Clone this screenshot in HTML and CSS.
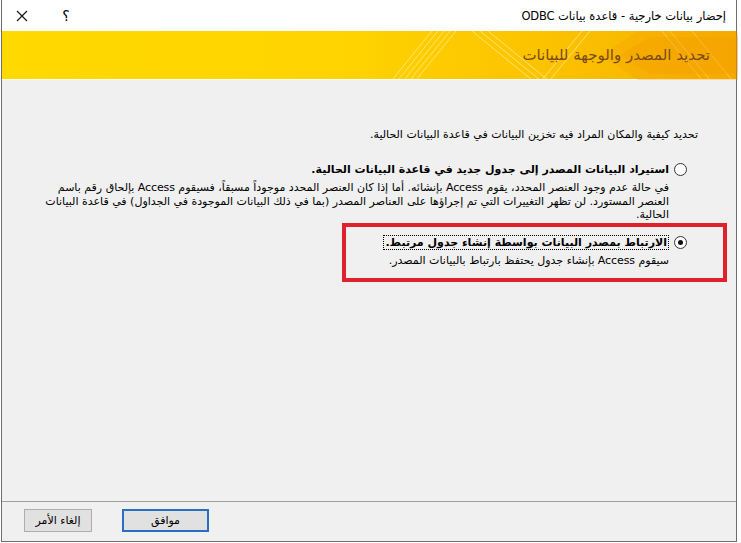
FILE: index.html
```html
<!DOCTYPE html>
<html lang="ar" dir="rtl">
<head>
<meta charset="UTF-8">
<title>إحضار بيانات خارجية - قاعدة بيانات ODBC</title>
<link rel="stylesheet" href="styles.css">
</head>
<body>

<div class="window">

  <!-- Title bar -->
  <div class="titlebar">
    <span class="title">إحضار بيانات خارجية - قاعدة بيانات ODBC</span>
    <div class="title-buttons">
      <span class="tb-help">؟</span>
      <span class="tb-close">
        <svg width="12" height="12" viewBox="0 0 12 12"><path d="M1 1 L11 11 M11 1 L1 11" stroke="#111" stroke-width="1.1" fill="none"/></svg>
      </span>
    </div>
  </div>

  <!-- Yellow banner -->
  <div class="banner">
    <svg class="banner-art" width="736" height="49" viewBox="0 0 736 49" preserveAspectRatio="none">
      <g stroke="#fff6b0" stroke-opacity=".6" stroke-width="1" fill="none">
        <path d="M390 49 L430 0"/><path d="M396 49 L436 0"/><path d="M402 49 L442 0"/>
        <path d="M408 49 L448 0"/><path d="M414 49 L454 0"/>
        <path d="M470 0 L530 49"/><path d="M478 0 L538 49"/><path d="M486 0 L546 49"/>
        <path d="M540 49 L580 0"/><path d="M548 49 L588 0"/>
        <path d="M660 0 L700 49"/><path d="M668 0 L708 49"/><path d="M690 0 L730 49"/>
      </g>
      <polygon points="600,24 636,0 736,0 736,49 636,49" fill="#f5a300" fill-opacity=".35"/>
      <polygon points="618,24 648,6 736,6 736,43 648,43" fill="#f29a00" fill-opacity=".3"/>
    </svg>
    <span class="banner-text">تحديد المصدر والوجهة للبيانات</span>
  </div>

  <!-- Content -->
  <div class="content">
    <p class="intro">تحديد كيفية والمكان المراد فيه تخزين البيانات في قاعدة البيانات الحالية.</p>

    <div class="option">
      <span class="radio"></span>
      <div class="option-body">
        <div class="option-label">استيراد البيانات المصدر إلى جدول جديد في قاعدة البيانات الحالية.</div>
        <div class="option-desc">في حالة عدم وجود العنصر المحدد، يقوم Access بإنشائه. أما إذا كان العنصر المحدد موجوداً مسبقاً، فسيقوم Access بإلحاق رقم باسم العنصر المستورد. لن تظهر التغييرات التي تم إجراؤها على العناصر المصدر (بما في ذلك البيانات الموجودة في الجداول) في قاعدة البيانات الحالية.</div>
      </div>
    </div>

    <div class="option option-marked">
      <span class="radio checked"></span>
      <div class="option-body">
        <div class="option-label"><span class="focus">الارتباط بمصدر البيانات بواسطة إنشاء جدول مرتبط.</span></div>
        <div class="option-desc">سيقوم Access بإنشاء جدول يحتفظ بارتباط بالبيانات المصدر.</div>
      </div>
    </div>
  </div>

  <!-- Buttons -->
  <div class="footer">
    <button class="btn btn-default">موافق</button>
    <button class="btn">إلغاء الأمر</button>
  </div>

</div>

</body>
</html>
```

FILE: styles.css
```css
* { margin: 0; padding: 0; box-sizing: border-box; }
body { background: #fff; font-family: "DejaVu Sans", sans-serif; font-size: 11px; color: #000; }

.window { width: 736px; height: 542px; margin: 0 auto 0 1px; border: 1px solid #6e6e6e; border-top: none; background: #f0f0f0; display: flex; flex-direction: column; }

.titlebar { height: 31px; background: #fff; display: flex; align-items: center; justify-content: space-between; padding-right: 10px; }
.title { font-size: 11.5px; letter-spacing: -0.2px; color: #000; }
.title-buttons { display: flex; align-items: center; }
.tb-help { width: 40px; text-align: center; font-size: 14px; margin-left: 4px; }
.tb-close { width: 40px; display: flex; justify-content: center; }

.banner { position: relative; height: 49px; background: linear-gradient(to right, #ffd900 0%, #ffd400 45%, #fbc200 75%, #f6ae00 100%); display: flex; align-items: center; padding-right: 26px; border-bottom: 1px solid #fff; }
.banner-art { position: absolute; left: 0; top: 0; }
.banner-text { position: relative; font-size: 15px; color: #7b4a12; }

.content { flex: 1; padding: 48px 38px 0 36px; border-bottom: 1px solid #a0a0a0; }
.intro { margin-bottom: 22px; }

.option { display: flex; align-items: flex-start; gap: 5px; margin-right: 11px; }
.radio { width: 13px; height: 13px; border: 1px solid #333; border-radius: 50%; background: #fff; flex-shrink: 0; position: relative; }
.radio.checked::after { content: ""; position: absolute; left: 3px; top: 3px; width: 5px; height: 5px; border-radius: 50%; background: #111; }
.option-body { flex: 1; }
.option-label { font-weight: bold; line-height: 14px; margin-bottom: 4px; letter-spacing: -0.2px; }
.option-desc { line-height: 13.5px; margin-left: 6px; letter-spacing: -0.1px; }

.option-marked { width: 385px; margin: 1px -29px 0 0; margin-left: auto; padding: 9px 36px 11px 0; border: 4px solid #e0212b; }
.focus { border: 1px dotted #000; padding: 0 1px; }

.footer { height: 39px; display: flex; align-items: flex-start; justify-content: flex-end; gap: 30px; padding: 7px 0 0 22px; }
.btn { font-family: "DejaVu Sans", sans-serif; font-size: 11px; height: 23px; background: #e1e1e1; border: 1px solid #adadad; color: #000; }
.btn-default { width: 87px; border: 2px solid #2a6fbd; }
.btn:last-child { width: 68px; }
```
